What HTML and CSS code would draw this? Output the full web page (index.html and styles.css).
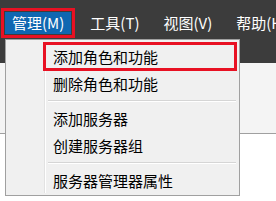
FILE: index.html
```html
<!DOCTYPE html>
<html lang="zh-CN">
<head>
    <meta charset="UTF-8">
    <title>服务器管理器</title>
    <link rel="stylesheet" href="styles.css">
</head>
<body>
    <div class="window">
        <div class="topbar">
            <div class="menubar">
                <div class="menubar-item active marked">管理(M)</div>
                <div class="menubar-item">工具(T)</div>
                <div class="menubar-item">视图(V)</div>
                <div class="menubar-item">帮助(H)</div>
            </div>
        </div>
        <div class="strip"></div>
        <div class="content"></div>

        <div class="dropdown">
            <div class="menu-item marked">添加角色和功能</div>
            <div class="menu-item">删除角色和功能</div>
            <div class="menu-sep"></div>
            <div class="menu-item">添加服务器</div>
            <div class="menu-item">创建服务器组</div>
            <div class="menu-sep"></div>
            <div class="menu-item">服务器管理器属性</div>
        </div>
    </div>
</body>
</html>
```

FILE: styles.css
```css
body {
    margin: 0;
    font-family: "Noto Sans CJK SC", "Noto Sans", sans-serif;
    font-size: 15px;
    background: #fff;
}

.window {
    position: relative;
    width: 276px;
    height: 201px;
    overflow: hidden;
}

.topbar {
    height: 63px;
    background: #3c3c3c;
}

.menubar {
    display: flex;
    padding-top: 12px;
    padding-left: 5px;
    white-space: nowrap;
}

.menubar-item {
    flex-shrink: 0;
    height: 22px;
    line-height: 22px;
    padding: 0 7px;
    margin-right: 10px;
    color: #fff;
}

.menubar-item.active {
    margin-right: 12px;
    background: #0f67b1;
}

.marked {
    outline: 3px solid #e81123;
}

.menubar-item.marked {
    outline-offset: 1px;
}

.strip {
    height: 70px;
    background: #f4f4f4;
    border-bottom: 1px solid #a0a0a0;
}

.dropdown {
    position: absolute;
    left: 5px;
    top: 39px;
    width: 233px;
    padding: 3px 0 1px;
    background: #f0f0f0;
    border: 1px solid #a0a0a0;
}

.dropdown::before {
    content: "";
    position: absolute;
    left: 38px;
    top: 2px;
    bottom: 2px;
    width: 1px;
    background: #e2e2e2;
    border-right: 1px solid #fff;
}

.menu-item {
    position: relative;
    height: 27px;
    line-height: 27px;
    margin: 0 3px 0 38px;
    padding-left: 9px;
    color: #000;
}

.menu-item.marked {
    outline-offset: -2px;
}

.menu-sep {
    height: 1px;
    margin: 3px 3px 3px 42px;
    background: #d5d5d5;
    border-bottom: 1px solid #fff;
}
```
